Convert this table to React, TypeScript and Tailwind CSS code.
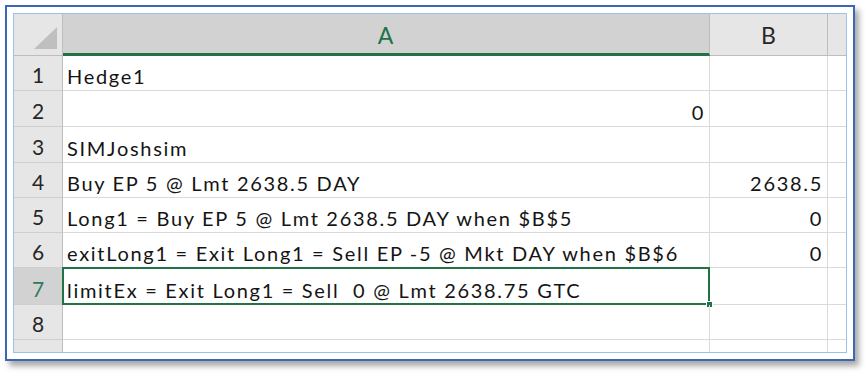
import React from 'react';

type Row = { n: number; a: string; b: string; aRight?: boolean; h: number };

const ROWS: Row[] = [
  { n: 1, a: 'Hedge1', b: '', h: 35 },
  { n: 2, a: '0', b: '', aRight: true, h: 36 },
  { n: 3, a: 'SIMJoshsim', b: '', h: 36 },
  { n: 4, a: 'Buy EP 5 @ Lmt 2638.5 DAY', b: '2638.5', h: 35 },
  { n: 5, a: 'Long1 = Buy EP 5 @ Lmt 2638.5 DAY when $B$5', b: '0', h: 35 },
  { n: 6, a: 'exitLong1 = Exit Long1 = Sell EP -5 @ Mkt DAY when $B$6', b: '0', h: 35 },
  { n: 7, a: 'limitEx = Exit Long1 = Sell  0 @ Lmt 2638.75 GTC', b: '', h: 37 },
  { n: 8, a: '', b: '', h: 35 },
];

const ACTIVE_ROW = 7;
const font = { fontFamily: 'Lato, "Open Sans", sans-serif' };

function CornerCell() {
  return (
    <div className="relative h-[42px] w-[49px] border-r border-b border-[#bdbdbd] bg-[#e6e6e6]">
      <svg className="absolute right-[5px] bottom-[6px]" width="23" height="22" viewBox="0 0 23 22">
        <polygon points="23,0 23,22 0,22" fill="#bfbfbf" />
      </svg>
    </div>
  );
}

export default function App() {
  return (
    <div className="h-[376px] w-[868px] bg-white" style={font}>
      <div className="ml-[5px] pt-[5px]">
        {/* window frame */}
        <div className="h-[356px] w-[850px] border-[2px] border-[#3a68b4] bg-white p-[6px] shadow-[4px_5px_6px_rgba(0,0,0,0.35)]">
          <div className="h-full w-full overflow-hidden border border-[#9cc2e8] bg-white">
            {/* column headers */}
            <div className="flex">
              <CornerCell />
              <div className="flex h-[42px] w-[647px] items-center justify-center border-r border-b-[3px] border-r-[#bdbdbd] border-b-[#217346] bg-[#d2d2d2] pt-[4px] text-[23px] tracking-[1px] text-[#217346]">
                A
              </div>
              <div className="flex h-[42px] w-[118px] items-center justify-center border-r border-b border-[#bdbdbd] bg-[#e6e6e6] pt-[2px] text-[23px] text-[#262626]">
                B
              </div>
              <div className="h-[42px] flex-1 border-b border-[#bdbdbd] bg-[#e6e6e6]" />
            </div>

            {ROWS.map((r) => {
              const active = r.n === ACTIVE_ROW;
              return (
                <div key={r.n} className="flex" style={{ height: r.h }}>
                  <div
                    className={`flex w-[49px] items-end justify-center border-r border-b border-r-[#bdbdbd] border-b-[#cfcfcf] pb-[5px] text-[21px] leading-none ${
                      active ? 'bg-[#d2d2d2] text-[#2f7a58]' : 'bg-[#e6e6e6] text-[#262626]'
                    }`}
                  >
                    {r.n}
                  </div>
                  <div
                    className={`relative flex w-[647px] items-end border-r border-b border-[#dadada] px-[4px] pb-[4px] text-[20px] leading-none tracking-[1.7px] whitespace-pre text-[#141414] ${
                      r.aRight ? 'justify-end' : 'justify-start'
                    }`}
                  >
                    {r.a}
                    {active && (
                      <>
                        <div className="pointer-events-none absolute -top-[1px] -left-[1px] -right-[1px] -bottom-[1px] border-2 border-[#217346]" />
                        <div className="absolute -right-[4px] -bottom-[4px] h-[7px] w-[7px] border border-white bg-[#217346]" />
                      </>
                    )}
                  </div>
                  <div className="flex w-[118px] items-end justify-end border-r border-b border-[#dadada] px-[4px] pb-[4px] text-[20px] leading-none tracking-[1.7px] text-[#141414]">
                    {r.b}
                  </div>
                  <div className="flex-1 border-b border-[#dadada]" />
                </div>
              );
            })}

            {/* partial row below 8 */}
            <div className="flex h-[20px]">
              <div className="w-[49px] border-r border-[#bdbdbd] bg-[#e6e6e6]" />
              <div className="w-[647px] border-r border-[#dadada]" />
              <div className="w-[118px] border-r border-[#dadada]" />
              <div className="flex-1" />
            </div>
          </div>
        </div>
      </div>
    </div>
  );
}
